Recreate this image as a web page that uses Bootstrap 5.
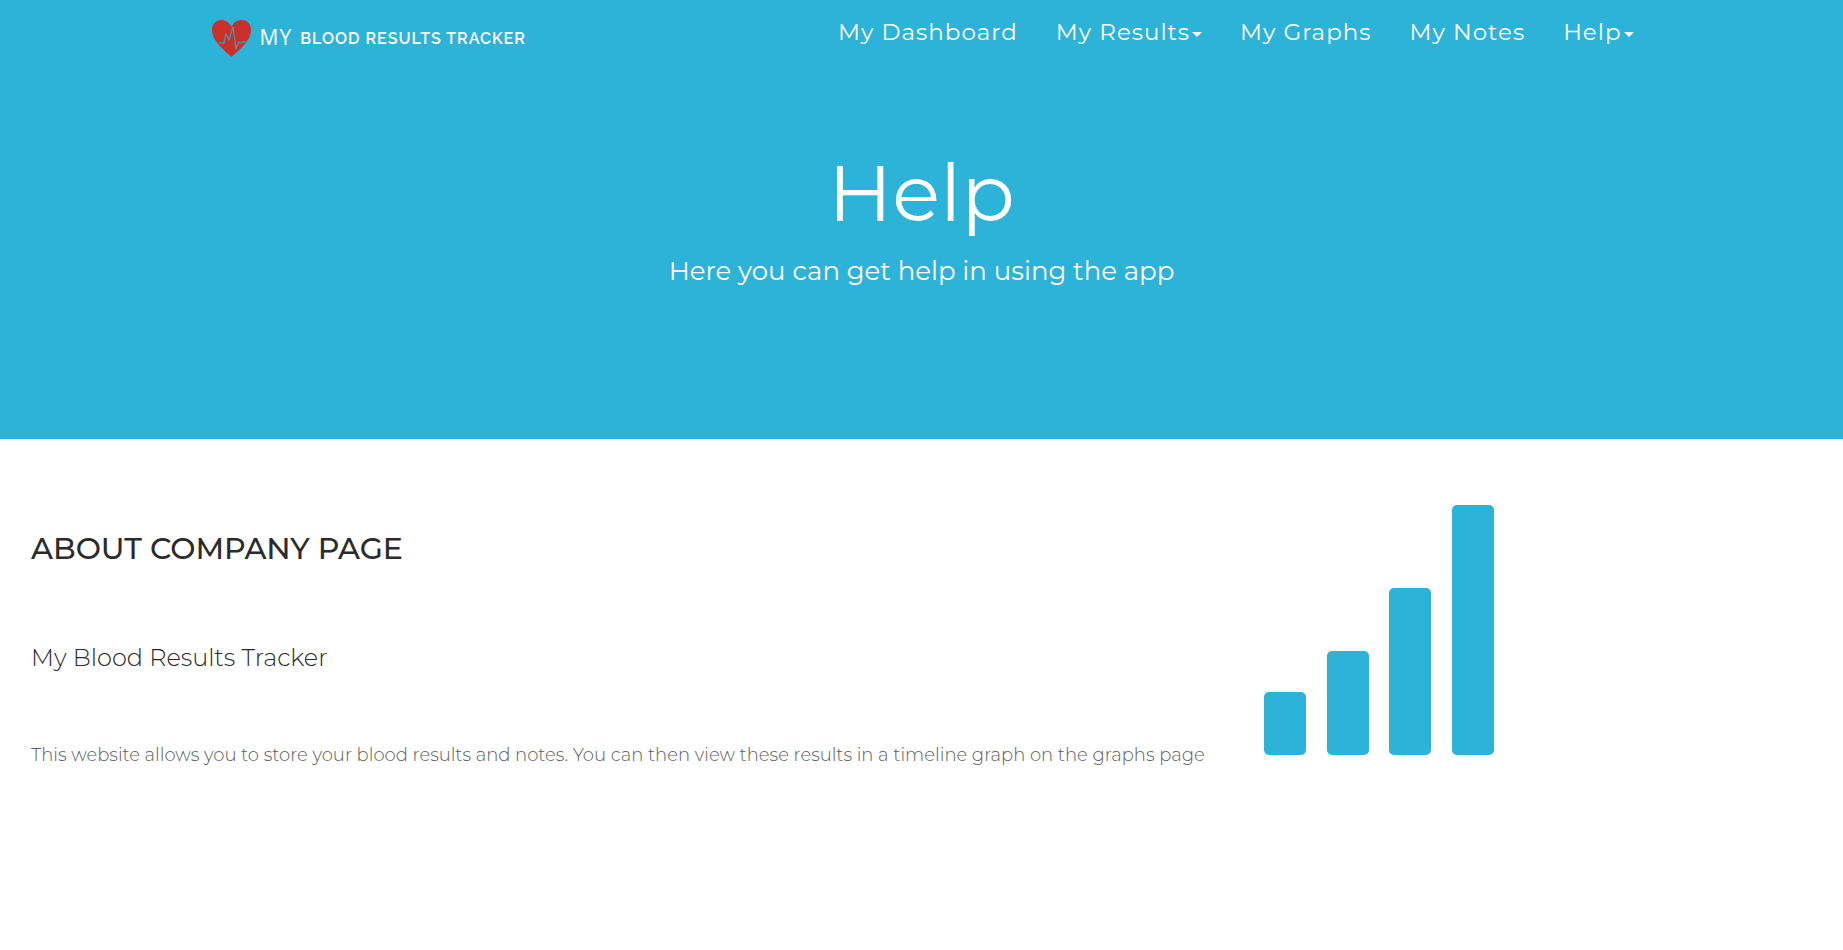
<!DOCTYPE html>
<html lang="en">
<head>
<meta charset="utf-8">
<meta name="viewport" content="width=device-width, initial-scale=1">
<title>Help - My Blood Results Tracker</title>
<link href="https://cdn.jsdelivr.net/npm/bootstrap@5.3.0/dist/css/bootstrap.min.css" rel="stylesheet">
<style>
  :root { --brand: #2db2d8; }
  body { font-family: Montserrat, Inter, "Open Sans", sans-serif; color: #2b2b2b; }
  .site-header { background: var(--brand); color: #fff; }
  .header-inner { max-width: 1440px; }
  .site-header .navbar { --bs-navbar-padding-y: 0; min-height: 74px; }
  .navbar-brand { --bs-navbar-brand-color: #fff; --bs-navbar-brand-hover-color: #fff; color: #fff; letter-spacing: 1px; }
  .brand-my { font: 400 21px/24px "Open Sans", sans-serif; }
  .brand-name { font: 600 16px/24px Raleway, Lato, sans-serif; }
  .site-header .nav-link { color: #fff; font-size: 23px; line-height: 32px; letter-spacing: 1px; padding: 0; }
  .site-header .dropdown-toggle::after { border-top-width: 5px; border-left-width: 5px; border-right-width: 5px; margin-left: 2px; vertical-align: 3px; }
  .main-nav { column-gap: 22px; }
  .hero { padding: 71px 16px 149px; }
  .hero h1 { font-size: 79px; line-height: 96px; font-weight: 400; margin-bottom: 12px; }
  .hero p { font-size: 26px; line-height: 37px; font-weight: 400; margin: 0; }
  .about { padding-top: 66px; }
  .about-text { padding: 24px 16px 0 31px; }
  .about h2 { font-size: 30px; line-height: 40px; font-weight: 500; margin-bottom: 73px; }
  .about h3 { font-size: 24px; line-height: 32px; font-weight: 350; margin-bottom: 67px; }
  .about p { font-size: 18px; line-height: 28px; font-weight: 300; color: #5c5c5c; margin: 0; }
  .about-art { padding-left: 35px; }
</style>
</head>
<body>
<header class="site-header">
  <nav class="navbar navbar-expand-lg align-items-start" aria-label="Main">
    <div class="container-fluid header-inner ps-2 pe-0 align-items-start">
      <a class="navbar-brand d-flex align-items-center p-0 m-0" href="#">
        <svg class="mt-3" width="42" height="46" viewBox="0 0 42 46" aria-hidden="true">
          <path d="M21.500 41C14 34 2 25 2 14C2 8 6 4 11.500 4C16 4 20 7 21.500 11C23 7 27 4 31.500 4C37 4 41 8 41 14C41 25 29 34 21.500 41Z" fill="#c9302c"/>
          <path d="M9 27h5l2-9 3 6 4-13 3 22 2.500-7 1.500 1 2-1h4" fill="none" stroke="#4f93a3" stroke-width="1.300" stroke-linejoin="round"/>
        </svg>
        <span class="brand-my mt-3 mb-1 ms-2">MY</span>
        <span class="brand-name mt-3 ms-2">BLOOD RESULTS TRACKER</span>
      </a>
      <button class="navbar-toggler mt-3" type="button" data-bs-toggle="collapse" data-bs-target="#mainNav" aria-controls="mainNav" aria-expanded="false" aria-label="Toggle navigation"><span class="navbar-toggler-icon"></span></button>
      <div class="collapse navbar-collapse pt-3" id="mainNav">
        <ul class="navbar-nav main-nav ms-auto">
          <li class="nav-item"><a class="nav-link" href="#">My Dashboard</a></li>
          <li class="nav-item dropdown"><a class="nav-link dropdown-toggle" href="#" role="button" data-bs-toggle="dropdown" aria-expanded="false">My Results</a></li>
          <li class="nav-item"><a class="nav-link" href="#">My Graphs</a></li>
          <li class="nav-item"><a class="nav-link" href="#">My Notes</a></li>
          <li class="nav-item dropdown"><a class="nav-link dropdown-toggle" href="#" role="button" data-bs-toggle="dropdown" aria-expanded="false">Help</a></li>
        </ul>
      </div>
    </div>
  </nav>
  <div class="hero text-center">
    <h1>Help</h1>
    <p>Here you can get help in using the app</p>
  </div>
</header>
<main class="container-fluid about">
  <div class="row">
    <section class="col-lg-8 about-text">
      <h2>ABOUT COMPANY PAGE</h2>
      <h3>My Blood Results Tracker</h3>
      <p>This website allows you to store your blood results and notes. You can then view these results in a timeline graph on the graphs page</p>
    </section>
    <div class="col-lg-4 about-art">
      <svg width="230" height="252" viewBox="0 0 230 252" fill="#2db2d8" role="img" aria-label="Rising bar graph">
        <rect y="187" width="42" height="63" rx="5"/>
        <rect x="63" y="146" width="42" height="104" rx="5"/>
        <rect x="125" y="83" width="42" height="167" rx="5"/>
        <rect x="188" y="0" width="42" height="250" rx="5"/>
      </svg>
    </div>
  </div>
</main>
<script src="https://cdn.jsdelivr.net/npm/bootstrap@5.3.0/dist/js/bootstrap.bundle.min.js"></script>
</body>
</html>
